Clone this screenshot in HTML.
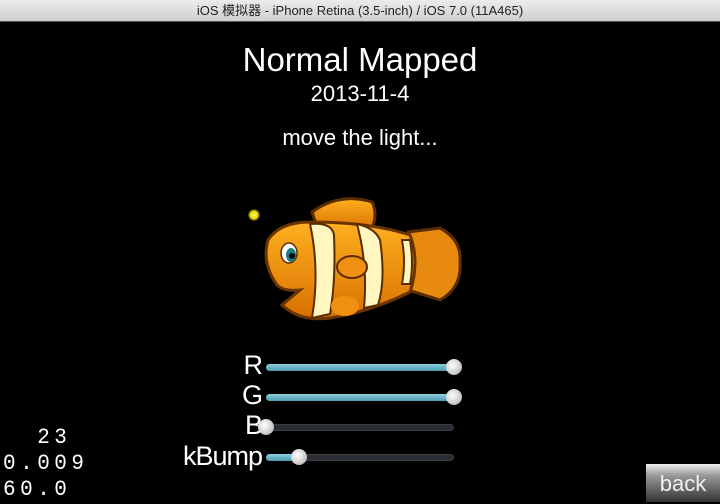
<!DOCTYPE html>
<html><head><meta charset="utf-8"><style>
body{margin:0;width:720px;height:502px;background:#000;overflow:hidden;position:relative;font-family:"Liberation Sans",sans-serif;}
.tb{position:absolute;left:0;top:0;width:720px;height:21px;background:linear-gradient(#ececec,#cfcfcf);border-bottom:1px solid #555;text-align:center;font:13px/21px "Liberation Sans","Noto Sans CJK SC",sans-serif;color:#222;}
.t{position:absolute;color:#fff;text-align:center;width:720px;left:0}
.lbl{position:absolute;color:#fff;font-size:27px;text-align:right;width:262px;left:0;letter-spacing:-1px}
.trk{position:absolute;left:266px;width:188px;height:7px;border-radius:4px;background:#2a2d33;border:1px solid #3a3d44;box-sizing:border-box}
.fill{position:absolute;left:266px;height:7px;border-radius:4px;background:linear-gradient(#8ccfe0,#4d9ab0)}
.k{position:absolute;width:16px;height:16px;border-radius:50%;background:radial-gradient(circle at 40% 40%,#fff,#ccc 60%,#888)}
.st{position:absolute;left:3px;color:#fff;font:21px "Liberation Mono",monospace;letter-spacing:4.5px;white-space:pre;transform:scaleY(1.05)}
.back{position:absolute;left:646px;top:464px;width:74px;height:38px;background:linear-gradient(#eee,#999 30%,#333);color:#f0f0f0;font-size:22px;text-align:center;line-height:40px}
</style></head><body>
<div class="tb">iOS 模拟器 - iPhone Retina (3.5-inch) / iOS 7.0 (11A465)</div>
<div class="t" style="top:41px;font-size:33px">Normal Mapped</div>
<div class="t" style="top:81px;font-size:22px">2013-11-4</div>
<div class="t" style="top:125px;font-size:22px">move the light...</div>
<svg style="position:absolute;left:0;top:0" width="720" height="502">
<defs><radialGradient id="g" cx="50%" cy="50%" r="50%"><stop offset="0" stop-color="#ffff60"/><stop offset=".6" stop-color="#e0d000"/><stop offset="1" stop-color="#000" stop-opacity="0"/></radialGradient>
<linearGradient id="o" x1="0" y1="0" x2="0" y2="1"><stop offset="0" stop-color="#ffb020"/><stop offset="1" stop-color="#d87000"/></linearGradient></defs>
<circle cx="254" cy="215" r="7" fill="url(#g)"/>
<path d="M408 232 L440 228 Q462 240 460 262 Q462 288 440 300 L408 290 Z" fill="#e88a10" stroke="#5a2c00" stroke-width="3"/>
<path d="M312 212 Q340 192 372 202 Q378 214 372 228 L318 230 Z" fill="url(#o)" stroke="#5a2c00" stroke-width="3"/>
<path d="M268 240 Q280 222 310 222 Q370 222 410 235 Q420 262 410 292 Q370 312 330 318 Q300 322 282 305 L300 290 Q280 292 275 282 Q262 262 268 240 Z" fill="url(#o)" stroke="#6a3400" stroke-width="3"/>
<path d="M310 224 Q332 222 334 235 Q336 280 330 314 L312 318 Q320 270 310 224 Z" fill="#fff6c0" stroke="#5a2c00" stroke-width="2"/>
<path d="M357 224 Q375 228 380 240 Q386 280 378 305 L364 308 Q368 265 357 224 Z" fill="#fff6c0" stroke="#5a2c00" stroke-width="2"/>
<path d="M402 240 L410 240 Q414 264 410 284 L402 284 Q406 262 402 240 Z" fill="#fff6c0" stroke="#5a2c00" stroke-width="2"/>
<ellipse cx="352" cy="267" rx="15" ry="11" fill="#f09010" stroke="#5a2c00" stroke-width="2"/>
<ellipse cx="345" cy="306" rx="14" ry="10" fill="#f09010"/>
<ellipse cx="289" cy="253" rx="8" ry="10" fill="#fff" stroke="#5a2c00" stroke-width="1.5"/>
<ellipse cx="291" cy="255" rx="5" ry="7" fill="#1a8080"/>
<circle cx="292" cy="256" r="3" fill="#000"/>
</svg>
<div class="lbl" style="top:350px">R</div>
<div class="lbl" style="top:380px">G</div>
<div class="lbl" style="top:410px">B</div>
<div class="lbl" style="top:441px">kBump</div>
<div class="trk" style="top:364px"></div><div class="fill" style="top:364px;width:188px"></div><div class="k" style="left:446px;top:359px"></div>
<div class="trk" style="top:394px"></div><div class="fill" style="top:394px;width:188px"></div><div class="k" style="left:446px;top:389px"></div>
<div class="trk" style="top:424px"></div><div class="k" style="left:258px;top:419px"></div>
<div class="trk" style="top:454px"></div><div class="fill" style="top:454px;width:32px"></div><div class="k" style="left:291px;top:449px"></div>
<div class="st" style="top:427px">  23</div>
<div class="st" style="top:453px">0.009</div>
<div class="st" style="top:479px">60.0</div>
<div class="back">back</div>
</body></html>
